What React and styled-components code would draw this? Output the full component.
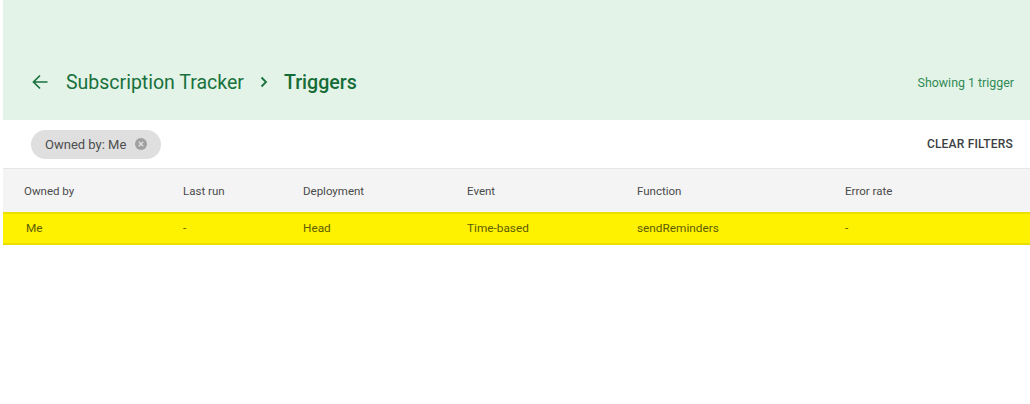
import React from 'react';
import styled, { createGlobalStyle } from 'styled-components';

const GlobalStyle = createGlobalStyle`
  html, body {
    margin: 0;
    padding: 0;
    background: #fff;
    font-family: Roboto, "Liberation Sans", sans-serif;
  }
`;

const Page = styled.div`
  width: 1030px;
  height: 404px;
  padding-left: 3px;
  box-sizing: border-box;
  overflow: hidden;
`;

const Header = styled.header`
  height: 120px;
  background: #e4f3e8;
  color: #18713c;
  display: flex;
  align-items: center;
  padding: 44px 16px 0 28px;
  box-sizing: border-box;
`;

const BackIcon = styled.svg`
  width: 18px;
  height: 18px;
  margin-right: 17px;
`;

const Crumb = styled.span`
  font-size: ${(p) => (p.$current ? '19.6px' : '19.5px')};
  font-weight: ${(p) => (p.$current ? 500 : 400)};
  color: ${(p) => (p.$current ? '#146c36' : '#18713c')};
`;

const Chevron = styled.svg`
  width: 10px;
  height: 12px;
  margin: 0 15px 0 15px;
`;

const Count = styled.span`
  margin-left: auto;
  font-size: 12.4px;
  color: #2f8a55;
`;

const FilterBar = styled.div`
  height: 49px;
  display: flex;
  align-items: center;
  justify-content: space-between;
  padding: 0 17px 0 28px;
  box-sizing: border-box;
  border-bottom: 1px solid #e6e6e6;
`;

const Chip = styled.div`
  height: 29px;
  width: 130px;
  border-radius: 15px;
  background: #dfdfdf;
  display: flex;
  align-items: center;
  padding-left: 14px;
  box-sizing: border-box;
  font-size: 13px;
  color: #4d4d4d;
`;

const ChipClose = styled.svg`
  width: 12px;
  height: 12px;
  margin-left: 9px;
`;

const ClearButton = styled.span`
  font-size: 12px;
  font-weight: 500;
  letter-spacing: 0.2px;
  color: #3c4043;
`;

const Row = styled.div`
  display: grid;
  grid-template-columns: 159px 120px 164px 170px 208px 1fr;
  align-items: center;
  padding-left: 21px;
  padding-bottom: ${(p) => (p.$head ? '0' : '2px')};
  box-sizing: border-box;
  font-size: ${(p) => (p.$head ? '11.5px' : '11.8px')};
  height: ${(p) => (p.$head ? '43px' : '33px')};
  color: ${(p) => (p.$head ? '#4a4a4a' : '#5d5c00')};
  background: ${(p) => (p.$head ? '#f4f4f4' : '#fff200')};
  border-top: ${(p) => (p.$head ? 'none' : '2px solid #ebdf00')};
  border-bottom: ${(p) => (p.$head ? 'none' : '2px solid #ebdf00')};
`;

const OwnerCell = styled.span`
  padding-left: 2px;
`;

const columns = ['Owned by', 'Last run', 'Deployment', 'Event', 'Function', 'Error rate'];
const trigger = ['-', 'Head', 'Time-based', 'sendReminders', '-'];

export default function App() {
  return (
    <>
      <GlobalStyle />
      <Page>
        <Header>
          <BackIcon viewBox="0 0 18 18" fill="none" stroke="#18713c" strokeWidth="1.7">
            <path d="M16.500 9H2.500M9 2.500L2.500 9l6.500 6.500" />
          </BackIcon>
          <Crumb>Subscription Tracker</Crumb>
          <Chevron viewBox="0 0 10 12" fill="none" stroke="#18713c" strokeWidth="1.8">
            <path d="M2.500 1.500L7 6l-4.500 4.500" />
          </Chevron>
          <Crumb $current>Triggers</Crumb>
          <Count>Showing 1 trigger</Count>
        </Header>
        <FilterBar>
          <Chip>
            Owned by: Me
            <ChipClose viewBox="0 0 12 12">
              <circle cx="6" cy="6" r="6" fill="#a0a0a0" />
              <path d="M3.800 3.800l4.400 4.400M8.200 3.800l-4.400 4.400" stroke="#dfdfdf" strokeWidth="1.300" />
            </ChipClose>
          </Chip>
          <ClearButton>CLEAR FILTERS</ClearButton>
        </FilterBar>
        <Row $head>
          {columns.map((c) => (
            <span key={c}>{c}</span>
          ))}
        </Row>
        <Row>
          <OwnerCell>Me</OwnerCell>
          {trigger.map((c, i) => (
            <span key={i}>{c}</span>
          ))}
        </Row>
      </Page>
    </>
  );
}
